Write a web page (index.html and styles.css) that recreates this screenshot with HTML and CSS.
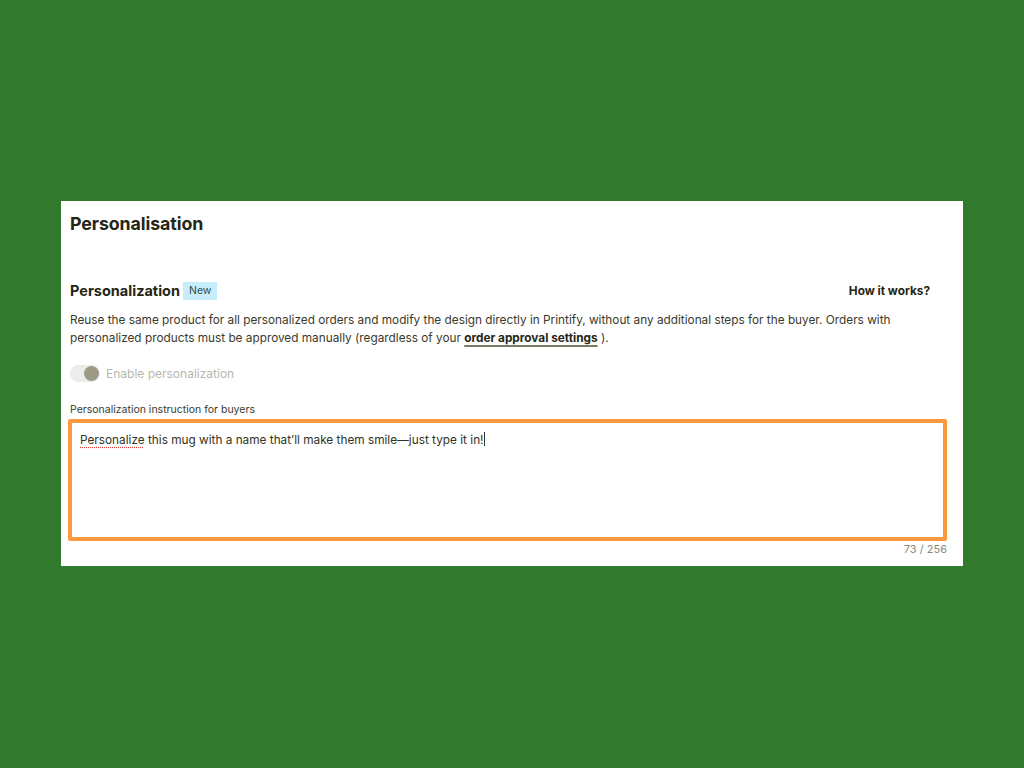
FILE: index.html
```html
<!DOCTYPE html>
<html lang="en">
<head>
<meta charset="utf-8">
<title>Personalisation</title>
<link rel="stylesheet" href="styles.css">
</head>
<body>
<div class="stage">
  <section class="card">
    <h1 class="title">Personalisation</h1>
    <div class="head-row">
      <div class="head-left">
        <h2 class="subtitle">Personalization</h2>
        <span class="badge">New</span>
      </div>
      <a class="how" href="#">How it works?</a>
    </div>
    <p class="desc">Reuse the same product for all personalized orders and modify the design directly in Printify, without any additional steps for the buyer. Orders with personalized products must be approved manually (regardless of your <a class="link" href="#">order approval settings</a>&nbsp;).</p>
    <div class="toggle-row">
      <span class="toggle"><span class="knob"></span></span>
      <span class="toggle-label">Enable personalization</span>
    </div>
    <label class="field-label">Personalization instruction for buyers</label>
    <div class="textarea"><span class="typo">Personalize</span> this mug with a name that’ll make them smile—just type it in!<span class="caret"></span></div>
    <div class="counter">73 / 256</div>
  </section>
</div>
</body>
</html>
```
FILE: styles.css
```css
html, body {
  margin: 0;
  padding: 0;
}
body {
  background: #327b2e;
  width: 1024px;
  height: 768px;
  overflow: hidden;
  font-family: "Inter", "Liberation Sans", sans-serif;
  color: #262616;
}
.stage {
  padding: 201px 61px 0 61px;
}
.card {
  background: #ffffff;
  width: 902px;
  height: 365px;
  box-sizing: border-box;
  padding: 11px 16px 0 9px;
}
.title {
  margin: 0;
  font-size: 17.8px;
  line-height: 24px;
  font-weight: 700;
  letter-spacing: -0.1px;
}
.head-row {
  margin-top: 45px;
  display: flex;
  justify-content: space-between;
  align-items: center;
  padding-right: 17px;
}
.head-left {
  display: flex;
  align-items: center;
  gap: 3px;
}
.subtitle {
  margin: 0;
  font-size: 14.5px;
  line-height: 20px;
  font-weight: 700;
}
.badge {
  background: #c6edfb;
  color: #3b4b3c;
  font-size: 10.5px;
  line-height: 18px;
  padding: 0 6px;
}
.how {
  font-size: 11.8px;
  font-weight: 700;
  color: #262616;
  text-decoration: none;
}
.desc {
  margin: 10px 0 0 0;
  font-size: 11.8px;
  line-height: 18px;
  color: #3a3a2c;
}
.link {
  color: #262616;
  font-weight: 700;
  text-decoration: underline;
  text-decoration-color: #7a7a62;
  text-decoration-thickness: 2px;
  text-underline-offset: 3px;
}
.toggle-row {
  margin-top: 18px;
  display: flex;
  align-items: center;
  gap: 6px;
}
.toggle {
  width: 30px;
  height: 17px;
  border-radius: 9px;
  background: #ececea;
  display: flex;
  justify-content: flex-end;
  align-items: center;
  padding: 0 1px;
  box-sizing: border-box;
}
.knob {
  width: 15px;
  height: 15px;
  border-radius: 50%;
  background: #9c9a86;
}
.toggle-label {
  font-size: 12px;
  color: #b7b7ae;
}
.field-label {
  display: block;
  margin-top: 21px;
  font-size: 10.5px;
  line-height: 14px;
  color: #3a3a2c;
}
.textarea {
  margin: 2px 0 0 -2px;
  width: 879px;
  height: 122px;
  box-sizing: border-box;
  border: 4px solid #fb9a3c;
  border-radius: 2px;
  padding: 9px 8px;
  font-size: 11.8px;
  line-height: 16px;
  color: #333323;
}
.typo {
  text-decoration: underline dotted #e04040;
  text-underline-offset: 3px;
}
.caret {
  display: inline-block;
  width: 1px;
  height: 14px;
  background: #333;
  vertical-align: -2px;
}
.counter {
  width: 877px;
  text-align: right;
  margin-top: 1px;
  font-size: 11px;
  color: #8a8a80;
}
```
